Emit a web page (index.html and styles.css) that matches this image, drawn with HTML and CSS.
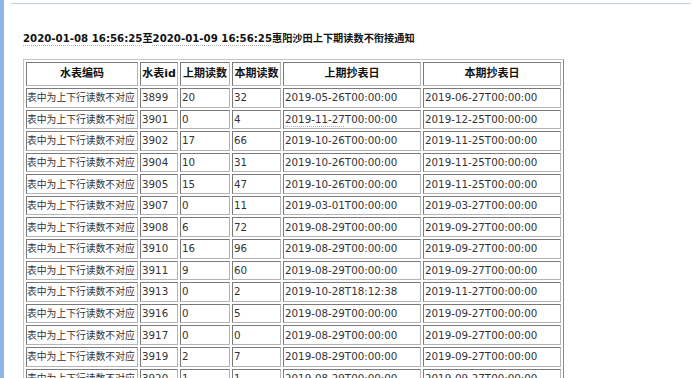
FILE: index.html
```html
<!DOCTYPE html>
<html lang="zh-CN">
<head>
<meta charset="utf-8">
<title>惠阳沙田上下期读数不衔接通知</title>
<link rel="stylesheet" href="styles.css">
</head>
<body>
<div class="page">
  <div class="edge"></div>
  <div class="main">
    <div class="topline"></div>
    <div class="content">
      <div class="title"><span class="dt">2020-01-08 16:56:25</span>至<span class="dt">2020-01-09 16:56:25</span>惠阳沙田上下期读数不衔接通知</div>
      <table class="grid">
        <thead>
          <tr>
            <th class="c1">水表编码</th>
            <th class="c2">水表id</th>
            <th class="c3">上期读数</th>
            <th class="c4">本期读数</th>
            <th class="c5">上期抄表日</th>
            <th class="c6">本期抄表日</th>
          </tr>
        </thead>
        <tbody>
          <tr><td>表中为上下行读数不对应</td><td>3899</td><td>20</td><td>32</td><td>2019-05-26T00:00:00</td><td>2019-06-27T00:00:00</td></tr>
          <tr><td>表中为上下行读数不对应</td><td>3901</td><td>0</td><td>4</td><td><span class="dt">2019-11-27</span>T00:00:00</td><td>2019-12-25T00:00:00</td></tr>
          <tr><td>表中为上下行读数不对应</td><td>3902</td><td>17</td><td>66</td><td>2019-10-26T00:00:00</td><td>2019-11-25T00:00:00</td></tr>
          <tr><td>表中为上下行读数不对应</td><td>3904</td><td>10</td><td>31</td><td>2019-10-26T00:00:00</td><td>2019-11-25T00:00:00</td></tr>
          <tr><td>表中为上下行读数不对应</td><td>3905</td><td>15</td><td>47</td><td>2019-10-26T00:00:00</td><td>2019-11-25T00:00:00</td></tr>
          <tr><td>表中为上下行读数不对应</td><td>3907</td><td>0</td><td>11</td><td>2019-03-01T00:00:00</td><td>2019-03-27T00:00:00</td></tr>
          <tr><td>表中为上下行读数不对应</td><td>3908</td><td>6</td><td>72</td><td>2019-08-29T00:00:00</td><td>2019-09-27T00:00:00</td></tr>
          <tr><td>表中为上下行读数不对应</td><td>3910</td><td>16</td><td>96</td><td>2019-08-29T00:00:00</td><td>2019-09-27T00:00:00</td></tr>
          <tr><td>表中为上下行读数不对应</td><td>3911</td><td>9</td><td>60</td><td>2019-08-29T00:00:00</td><td>2019-09-27T00:00:00</td></tr>
          <tr><td>表中为上下行读数不对应</td><td>3913</td><td>0</td><td>2</td><td>2019-10-28T18:12:38</td><td>2019-11-27T00:00:00</td></tr>
          <tr><td>表中为上下行读数不对应</td><td>3916</td><td>0</td><td>5</td><td>2019-08-29T00:00:00</td><td>2019-09-27T00:00:00</td></tr>
          <tr><td>表中为上下行读数不对应</td><td>3917</td><td>0</td><td>0</td><td>2019-08-29T00:00:00</td><td>2019-09-27T00:00:00</td></tr>
          <tr><td>表中为上下行读数不对应</td><td>3919</td><td>2</td><td>7</td><td>2019-08-29T00:00:00</td><td>2019-09-27T00:00:00</td></tr>
          <tr><td>表中为上下行读数不对应</td><td>3920</td><td>1</td><td>1</td><td>2019-08-29T00:00:00</td><td>2019-09-27T00:00:00</td></tr>
        </tbody>
      </table>
    </div>
  </div>
</div>
</body>
</html>
```

FILE: styles.css
```css
html, body {
  margin: 0;
  padding: 0;
  height: 100%;
  overflow: hidden;
  background: #ffffff;
}

body {
  font-family: "DejaVu Sans", "Noto Sans CJK SC", sans-serif;
  color: #222222;
}

.page {
  display: flex;
  min-height: 100vh;
}

.edge {
  width: 4px;
  flex: none;
  background: #8db5e8;
}

.main {
  flex: 1;
  padding: 3px 1px 0 7px;
}

.topline {
  height: 1px;
  background: #b9d0e4;
}

.content {
  padding: 28px 0 0 12px;
}

.title {
  font-weight: bold;
  font-size: 10.2px;
  line-height: 14px;
  color: #111111;
  white-space: nowrap;
}

.dt {
  text-decoration-line: underline;
  text-decoration-style: dotted;
  text-decoration-color: #b0b0b0;
  text-underline-offset: 3px;
}

.grid {
  margin-top: 13px;
  table-layout: fixed;
  width: 541px;
  border-collapse: separate;
  border-spacing: 2px;
  border: 1px solid;
  border-color: #c4c4c4 #8a8a8a #8a8a8a #c4c4c4;
}

.grid th,
.grid td {
  box-sizing: border-box;
  border: 1px solid;
  border-color: #7a7a7a #b4b4b4 #b4b4b4 #7a7a7a;
  padding: 0 1px;
  white-space: nowrap;
  overflow: hidden;
  vertical-align: middle;
}

.grid th {
  height: 24px;
  font-size: 11px;
  font-weight: bold;
  color: #111111;
  text-align: center;
  line-height: 14px;
}

.grid td {
  height: 19.58px;
  font-size: 9.8px;
  line-height: 13px;
  color: #333333;
  text-align: left;
  padding: 0;
}

.grid td + td {
  font-size: 10.3px;
  padding: 0 1px;
}

.c1 { width: 112px; }
.c2 { width: 38px; }
.c3 { width: 50px; }
.c4 { width: 49px; }
.c5 { width: 138px; }
.c6 { width: 138px; }
```
